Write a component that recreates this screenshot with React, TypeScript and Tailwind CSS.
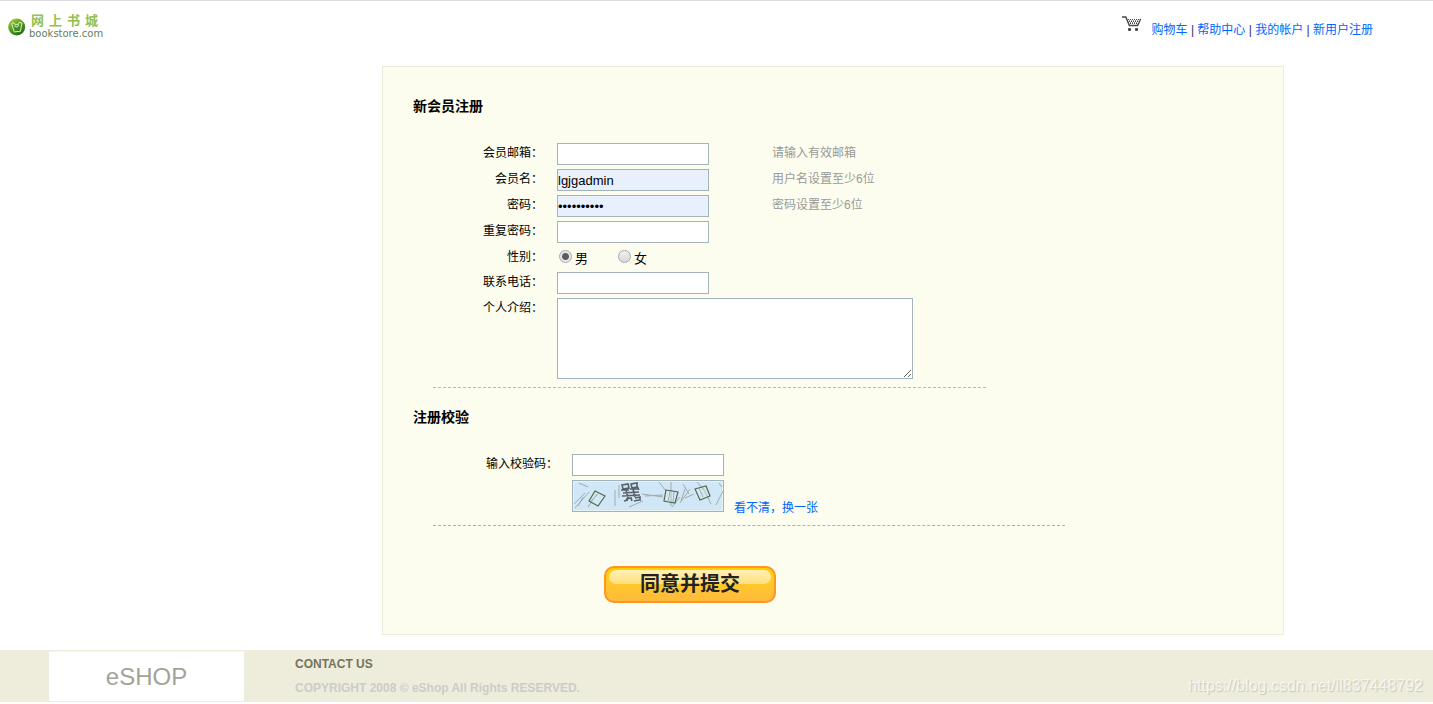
import React from "react";

const sans = "font-['Liberation_Sans','Noto_Sans_CJK_SC',sans-serif]";
const field =
  "block h-[22px] w-[152px] border border-[#a2b4ba] text-[13px] leading-5 text-black outline-none";

function Logo() {
  return (
    <a href="#home" aria-label="网上书城 bookstore.com" className="flex items-center gap-[3px]">
      <svg width="18" height="18" viewBox="0 0 18 18">
        <defs>
          <linearGradient id="ball" x1="0.2" y1="0" x2="0.8" y2="1">
            <stop offset="0" stopColor="#a3cf3a" />
            <stop offset="0.5" stopColor="#4d9a20" />
            <stop offset="1" stopColor="#1d6412" />
          </linearGradient>
        </defs>
        <circle cx="8.7" cy="9" r="8.5" fill="url(#ball)" />
        <path
          d="M3.6 5.6l2.2-.9 1.3 1.8 3.4-.2.8-2 2.7.7-1.6 8.3-6.2.6z"
          fill="none"
          stroke="#dcf0c8"
          strokeWidth="1"
          strokeLinejoin="round"
        />
        <path d="M6.6 7.8q2 2.4 4.6-.5" fill="none" stroke="#dcf0c8" strokeWidth="1" />
      </svg>
      <span className="flex flex-col">
        <span className="flex gap-[5px] pl-0.5 text-[13px] leading-[15px] font-bold text-[#93c050]">
          <span>网</span>
          <span>上</span>
          <span>书</span>
          <span>城</span>
        </span>
        <span className="font-['DejaVu_Sans',sans-serif] text-[10px] leading-3 text-[#66805a]">bookstore.com</span>
      </span>
    </a>
  );
}

function Cart() {
  return (
    <svg width="20" height="17" viewBox="0 0 20 17" className="mb-1 shrink-0">
      <path d="M0 1h3.8l3.6 8.5h8.2L18.6 3" fill="none" stroke="#484848" strokeWidth="1.5" />
      <path d="M6 3.5h13M7 5.5h10M8 7.5h8" stroke="#484848" strokeWidth="1" strokeDasharray="1 1" />
      <path d="M7 4.5h11M8 6.5h9" stroke="#8a8a8a" strokeWidth="1" strokeDasharray="1 1" />
      <rect x="6" y="12" width="3" height="3" rx="1" fill="#484848" />
      <rect x="13" y="12" width="3" height="3" rx="1" fill="#484848" />
    </svg>
  );
}

function Captcha() {
  return (
    <svg
      role="img"
      aria-label="校验码"
      width="152"
      height="32"
      viewBox="0 0 150 30"
      className="border border-[#a2b4ba] bg-[#e6f2f4]"
    >
      <rect x="1" y="1" width="148" height="28" fill="#cfe7f7" />
      <path
        d="M1 23L12 12M2 27L16 11M5 25l5-9M6 2l9 4M15 26l9-13M42 9v16M46 4v13M56 26l14-6M69 13l21 3M72 15l18-1M86 1l7 9M98 1v24M99 26l8-10M107 22l10-14M110 3l6 10M112 17l9-4M124 1l6 7M130 7l8 16M143 24l7-14M146 2l3 4M112 8l-4 12"
        fill="none"
        stroke="#a4a9ab"
        strokeWidth="1"
      />
      <g fill="#dcecea" fillOpacity="0.3" stroke="#52694f" strokeWidth="1.2">
        <path d="M22 10l10 5-7 10-9-5z" />
        <path d="M93 9l12 2-3 11-11-2z" />
        <path d="M122 8l11-3 4 10-10 4z" />
      </g>
      <path d="M97 10l-2 11M101 11l-1 10M126 7l4 9M18 20l7-7" stroke="#a3b0a9" fill="none" />
      <path
        d="M49 4l6-1 1 4-6 1zM58 3l6-1v4l-5 1zM48 9h8M57 8h9M50 12l16-1M49 15l18-1M53 9l2 8M60 8l2 8M53 18l5-1 1 3M62 17l5-1v4M51 20l4-1M61 20l5-1M64 5l2 4"
        fill="none"
        stroke="#596068"
        strokeWidth="1.6"
      />
    </svg>
  );
}

interface RowProps {
  label: string;
  id: string;
  hint?: string;
  children: React.ReactNode;
}

function Row({ label, id, hint, children }: RowProps) {
  return (
    <div className="flex items-start">
      <label htmlFor={id} className="mr-3.5 w-[110px] shrink-0 text-right leading-5">
        {label}：
      </label>
      {children}
      {hint && <span className="ml-[63px] leading-5 text-[#999]">{hint}</span>}
    </div>
  );
}

function Gender({ id, label, checked }: { id: string; label: string; checked?: boolean }) {
  return (
    <span className="flex items-start gap-[3px]">
      <input
        id={id}
        type="radio"
        name="gender"
        defaultChecked={checked}
        className="mt-[3px] size-[13px] appearance-none rounded-full border border-[#a9a9a9] bg-linear-to-b from-[#f0f0f0] to-[#d8d8d8] checked:bg-[radial-gradient(circle,#5c5c5c_0_3px,#e8e8e8_4px)]"
      />
      <label htmlFor={id} className="text-[13px] leading-6">
        {label}
      </label>
    </span>
  );
}

const links = ["购物车", "帮助中心", "我的帐户", "新用户注册"];

export default function App() {
  return (
    <div lang="zh-CN" className={`relative border-t border-[#dadae0] bg-white text-[12px] text-black ${sans}`}>
      <header className="flex h-[65px] items-start justify-between pt-3 pr-[60px] pl-2">
        <Logo />
        <nav className="flex items-center gap-2.5 pt-0.5">
          <Cart />
          <span className="pt-2 leading-[14px] text-[#303070]">
            {links.map((text, i) => (
              <React.Fragment key={text}>
                {i > 0 && " | "}
                <a href="#nav" className="text-[#0066ff]">
                  {text}
                </a>
              </React.Fragment>
            ))}
          </span>
        </nav>
      </header>

      <main className="mr-[149px] ml-[382px] border border-[#ecedd9] bg-[#fcfdee] px-[30px] pt-[29px] pb-[31px]">
        <form onSubmit={(e) => e.preventDefault()}>
          <h1 className="text-[14px] leading-5 font-bold">新会员注册</h1>
          <div className="mt-[27px] ml-5 flex flex-col gap-1">
            <Row label="会员邮箱" id="email" hint="请输入有效邮箱">
              <input id="email" type="text" className={`${field} bg-white`} />
            </Row>
            <Row label="会员名" id="user" hint="用户名设置至少6位">
              <input id="user" type="text" defaultValue="lgjgadmin" className={`${field} bg-[#e8f0fe]`} />
            </Row>
            <Row label="密码" id="pass" hint="密码设置至少6位">
              <input id="pass" type="password" defaultValue="abcdefghij" className={`${field} bg-[#e8f0fe]`} />
            </Row>
            <Row label="重复密码" id="repeat">
              <input id="repeat" type="password" className={`${field} bg-white`} />
            </Row>
            <Row label="性别" id="male">
              <span className="flex h-[21px] gap-[30px] pl-0.5">
                <Gender id="male" label="男" checked />
                <Gender id="female" label="女" />
              </span>
            </Row>
            <Row label="联系电话" id="phone">
              <input id="phone" type="text" className={`${field} bg-white`} />
            </Row>
            <Row label="个人介绍" id="intro">
              <textarea
                id="intro"
                className="block h-[81px] w-[356px] border border-[#a2b4ba] bg-white outline-none"
              />
            </Row>
          </div>
          <hr className="mt-2 ml-5 max-w-[553px] border-t border-dashed border-[#b0bcc0]" />

          <h2 className="mt-[19px] text-[14px] leading-5 font-bold">注册校验</h2>
          <div className="mt-[27px] ml-5 flex items-start">
            <label htmlFor="code" className="mr-3.5 w-[125px] shrink-0 text-right leading-5">
              输入校验码：
            </label>
            <div className="flex flex-col gap-1">
              <input id="code" type="text" className={`${field} bg-white`} />
              <div className="flex items-end gap-2.5">
                <Captcha />
                <a href="#refresh" className="-mb-1 leading-4 text-[#0066ff]">
                  看不清，换一张
                </a>
              </div>
            </div>
          </div>
          <hr className="mt-[13px] ml-5 max-w-[632px] border-t border-dashed border-[#a2b4ba]" />

          <button
            type="submit"
            className="relative mt-10 ml-[191px] block h-[37px] w-[172px] rounded-[10px] border-2 border-[#ff9525] bg-linear-to-b from-[#ffd000] via-[#ffc82a] to-[#ffba3c] text-[20px] leading-[33px] font-bold text-[#222]"
          >
            <span className="absolute inset-x-[3px] top-0.5 h-3.5 rounded-[7px] bg-linear-to-b from-white/70 to-white/40" />
            <span className="relative">同意并提交</span>
          </button>
        </form>
      </main>

      <footer className="mt-[15px] flex h-[52px] items-center bg-[#eeecdb] pl-[49px]">
        <div className="flex h-[50px] w-[195px] items-center justify-center border-t border-[#f7f6ec] bg-white text-[24px] text-[#a3a398]">
          eSHOP
        </div>
        <div className="ml-[51px] leading-6 font-bold">
          <p className="text-[#76735c]">CONTACT US</p>
          <p className="text-[#cccccc]">COPYRIGHT 2008 © eShop All Rights RESERVED.</p>
        </div>
      </footer>
      <span className="absolute right-2.5 bottom-[7px] text-[16px] leading-[18px] text-white/70 [text-shadow:1px_1px_1px_#c8c7b8]">
        https://blog.csdn.net/ll837448792
      </span>
    </div>
  );
}
